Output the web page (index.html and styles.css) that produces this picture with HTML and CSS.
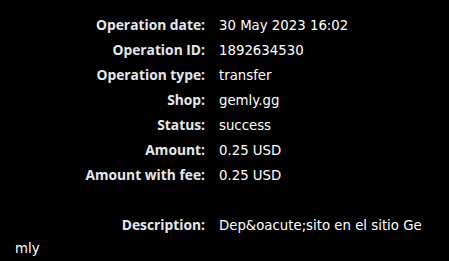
FILE: index.html
```html
<!DOCTYPE html>
<html>
<head>
<meta charset="utf-8">
<link rel="stylesheet" href="styles.css">
</head>
<body>
<div class="details">
  <div class="row"><span class="label">Operation date:</span><span class="value">30 May 2023 16:02</span></div>
  <div class="row"><span class="label">Operation ID:</span><span class="value">1892634530</span></div>
  <div class="row"><span class="label">Operation type:</span><span class="value">transfer</span></div>
  <div class="row"><span class="label">Shop:</span><span class="value">gemly.gg</span></div>
  <div class="row"><span class="label">Status:</span><span class="value">success</span></div>
  <div class="row"><span class="label">Amount:</span><span class="value">0.25 USD</span></div>
  <div class="row"><span class="label">Amount with fee:</span><span class="value">0.25 USD</span></div>
  <div class="row empty"></div>
  <div class="row desc"><span class="label">Description:</span><span class="value">Dep&amp;oacute;sito en el sitio Gemly</span></div>
</div>
</body>
</html>
```
FILE: styles.css
```css
html, body {
  margin: 0;
  padding: 0;
  background: #000;
}
.details {
  padding: 12px 19px 0 15px;
  font-size: 14px;
  color: #fff;
}
.row {
  height: 25px;
  line-height: 25px;
  white-space: nowrap;
}
.row.desc {
  height: auto;
  line-height: 23px;
  padding-top: 1px;
  white-space: normal;
  word-break: break-all;
}
.label {
  display: inline-block;
  width: 190px;
  margin-right: 14px;
  text-align: right;
  font-family: "Open Sans", sans-serif;
  font-weight: 700;
  font-size: 13.8px;
  color: #e4e8ee;
}
.value {
  font-family: "DejaVu Sans", sans-serif;
  font-size: 13.3px;
  color: #fff;
}
```
